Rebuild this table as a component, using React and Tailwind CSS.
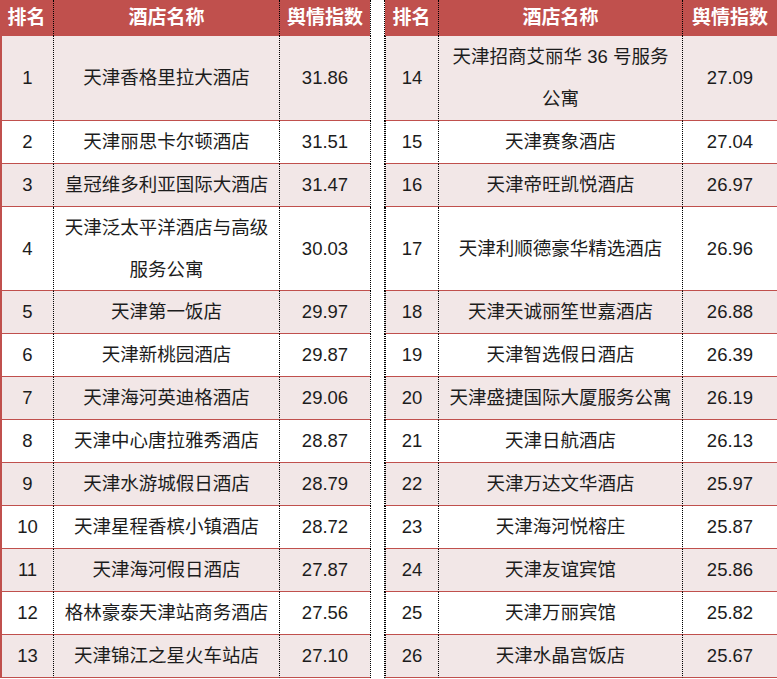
import React from "react";

const left = [
  ["1", ["天津香格里拉大酒店"], "31.86", 2],
  ["2", ["天津丽思卡尔顿酒店"], "31.51", 1],
  ["3", ["皇冠维多利亚国际大酒店"], "31.47", 1],
  ["4", ["天津泛太平洋酒店与高级", "服务公寓"], "30.03", 2],
  ["5", ["天津第一饭店"], "29.97", 1],
  ["6", ["天津新桃园酒店"], "29.87", 1],
  ["7", ["天津海河英迪格酒店"], "29.06", 1],
  ["8", ["天津中心唐拉雅秀酒店"], "28.87", 1],
  ["9", ["天津水游城假日酒店"], "28.79", 1],
  ["10", ["天津星程香槟小镇酒店"], "28.72", 1],
  ["11", ["天津海河假日酒店"], "27.87", 1],
  ["12", ["格林豪泰天津站商务酒店"], "27.56", 1],
  ["13", ["天津锦江之星火车站店"], "27.10", 1],
];

const right = [
  ["14", ["天津招商艾丽华 36 号服务", "公寓"], "27.09"],
  ["15", ["天津赛象酒店"], "27.04"],
  ["16", ["天津帝旺凯悦酒店"], "26.97"],
  ["17", ["天津利顺德豪华精选酒店"], "26.96"],
  ["18", ["天津天诚丽笙世嘉酒店"], "26.88"],
  ["19", ["天津智选假日酒店"], "26.39"],
  ["20", ["天津盛捷国际大厦服务公寓"], "26.19"],
  ["21", ["天津日航酒店"], "26.13"],
  ["22", ["天津万达文华酒店"], "25.97"],
  ["23", ["天津海河悦榕庄"], "25.87"],
  ["24", ["天津友谊宾馆"], "25.86"],
  ["25", ["天津万丽宾馆"], "25.82"],
  ["26", ["天津水晶宫饭店"], "25.67"],
];

const headCell =
  "flex items-center justify-center h-[36px] bg-[#c0504d] text-white font-bold text-[19px] border-l border-l-black [border-left-style:dotted]";

function Cell({ children, shade, first }) {
  return (
    <div
      className={
        (shade ? "bg-[#f2e7e7] " : "bg-white ") +
        (first
          ? "border-l-2 border-l-[#c0504d] "
          : "border-l border-l-black [border-left-style:dotted] ") +
        "flex flex-col items-center justify-center text-center leading-[41.9px] border-b border-b-[#c0504d] text-[18.5px] text-[#1c1c1c]"
      }
    >
      {children}
    </div>
  );
}

function Gap() {
  return (
    <div className="bg-white border-x border-x-black [border-left-style:dotted] [border-right-style:dotted]" />
  );
}

export default function App() {
  return (
    <div
      className="w-[777px] h-[679px] bg-white overflow-hidden"
      style={{ fontFamily: '"Liberation Sans", "Noto Sans CJK SC", sans-serif' }}
    >
      <div className="grid grid-cols-[53px_226px_91px_15px_53px_244px_95px]">
        <div className={headCell + " !border-l-0"}>排名</div>
        <div className={headCell}>酒店名称</div>
        <div className={headCell}>舆情指数</div>
        <Gap />
        <div className={headCell + " !border-l-0"}>排名</div>
        <div className={headCell}>酒店名称</div>
        <div className={headCell}>舆情指数</div>
        {left.map((l, i) => {
          const r = right[i];
          const shade = i % 2 === 0;
          return (
            <React.Fragment key={l[0]}>
              <Cell shade={shade} first>
                {l[0]}
              </Cell>
              <Cell shade={shade}>
                {l[1].map((t) => (
                  <span key={t}>{t}</span>
                ))}
              </Cell>
              <Cell shade={shade}>{l[2]}</Cell>
              <Gap />
              <Cell shade={shade}>{r[0]}</Cell>
              <Cell shade={shade}>
                {r[1].map((t) => (
                  <span key={t}>{t}</span>
                ))}
              </Cell>
              <Cell shade={shade}>{r[2]}</Cell>
            </React.Fragment>
          );
        })}
      </div>
    </div>
  );
}
